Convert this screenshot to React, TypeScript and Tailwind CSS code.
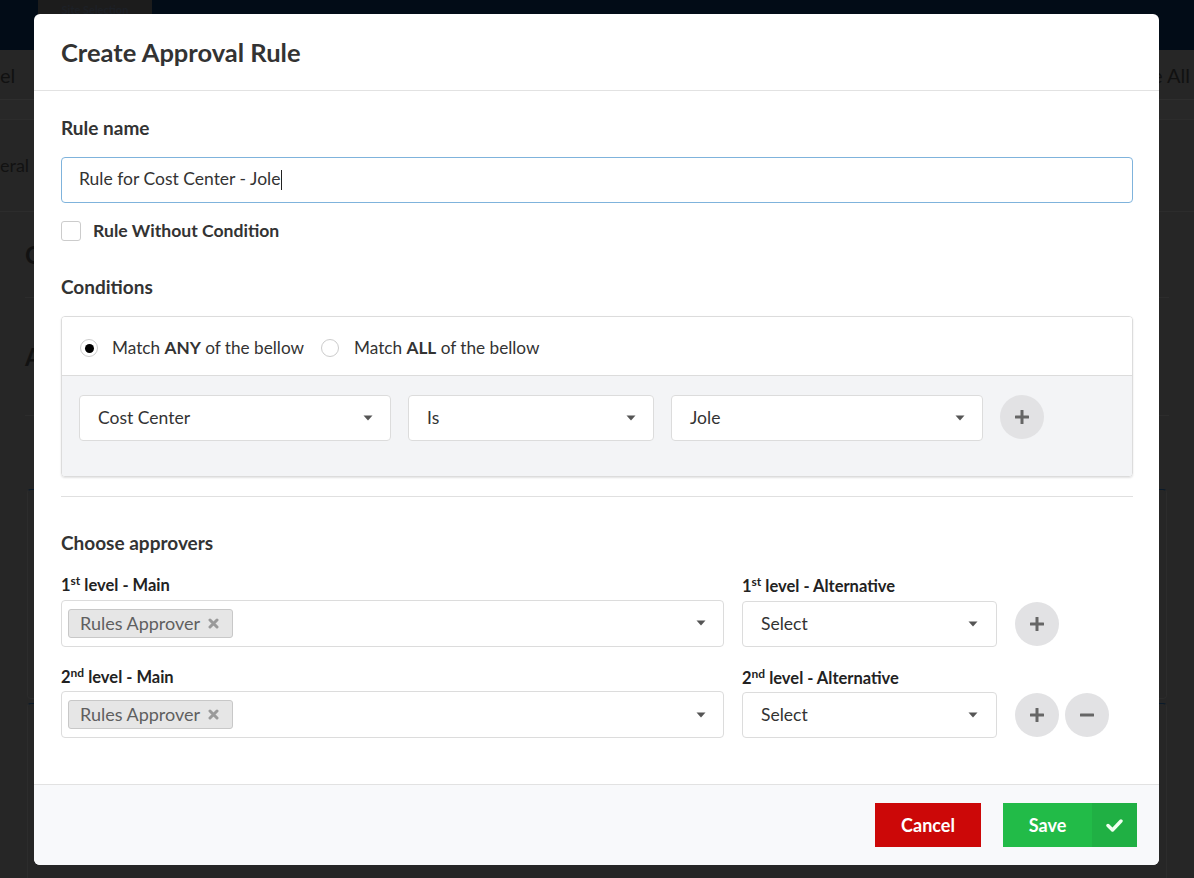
import React from "react";

const Caret = () => (
  <svg width="10" height="6" viewBox="0 0 10 6" className="shrink-0">
    <path d="M0.5 0.5 L9.5 0.5 L5 5.5 Z" fill="#555" />
  </svg>
);

const Select = ({ value, className = "" }: { value: string; className?: string }) => (
  <div
    className={
      "flex h-[46px] items-center justify-between rounded-[4px] border border-[#dcdcdc] bg-white pl-[18px] pr-[17px] text-[17.5px] text-[#333] " +
      className
    }
  >
    <span>{value}</span>
    <Caret />
  </div>
);

const RoundButton = ({ kind }: { kind: "plus" | "minus" }) => (
  <button className="flex h-[44px] w-[44px] items-center justify-center rounded-full bg-[#e2e2e4]">
    <svg width="14" height="14" viewBox="0 0 14 14">
      {kind === "plus" && <rect x="5.5" y="0" width="3" height="14" rx="0.5" fill="#666" />}
      <rect x="0" y="5.5" width="14" height="3" rx="0.5" fill="#666" />
    </svg>
  </button>
);

const Tag = () => (
  <div className="flex h-[29px] items-center gap-[8px] rounded-[3px] border border-[#c8c8c8] bg-[#e6e6e6] pl-[11px] pr-[13px] text-[18px] text-[#5f5f5f]">
    <span>Rules Approver</span>
    <svg width="11" height="11" viewBox="0 0 11 11">
      <path d="M2 2 L9 9 M9 2 L2 9" stroke="#9a9a9a" strokeWidth="3" strokeLinecap="round" />
    </svg>
  </div>
);

const MultiSelect = () => (
  <div className="flex h-[47px] items-center justify-between rounded-[4px] border border-[#dcdcdc] bg-white pl-[6px] pr-[17px]">
    <Tag />
    <Caret />
  </div>
);

const LevelLabel = ({ n, sup, text }: { n: string; sup: string; text: string }) => (
  <div className="mb-[2px] text-[16.5px] font-bold text-[#222]">
    {n}
    <sup className="text-[12px]">{sup}</sup> {text}
  </div>
);

const Radio = ({ checked }: { checked?: boolean }) => (
  <span className="flex h-[18px] w-[18px] items-center justify-center rounded-full border border-[#ccc] bg-white">
    {checked && <span className="h-[9px] w-[9px] rounded-full bg-black" />}
  </span>
);

export default function App() {
  return (
    <div className="relative h-[878px] w-full overflow-hidden bg-[#262626] font-['Lato','Open_Sans',sans-serif]">
      {/* dimmed page behind the dialog */}
      <div className="flex h-[50px] bg-[#020c17]">
        <div className="ml-[38px] w-[114px] bg-[#1c1c1c] pt-[2px] text-center text-[11px] font-bold text-[#1c2026]">
          Site Selection
        </div>
      </div>
      <div className="flex h-[50px] items-center justify-between border-b border-[#2e2e2e] pr-[4px] text-[20px] text-[#111]">
        <span>el</span>
        <span>ge All</span>
      </div>
      <div className="h-[20px] border-b border-[#2c2c2c] bg-[#282828]" />
      <div className="flex h-[92px] items-center border-b border-[#2c2c2c] text-[18px] text-[#121212]">
        <span>eral Info</span>
      </div>
      <div className="mx-[25px] flex h-[86px] items-center border-b border-[#2c2c2c] text-[24px] font-bold text-[#121212]">
        C
      </div>
      <div className="mx-[25px] flex h-[118px] items-center border-b border-[#2c2c2c] text-[24px] font-bold text-[#121212]">
        A
      </div>
      <div className="mx-[27px] mt-[73px] h-[210px] rounded-[4px] border border-[#2c2c2c] border-t-[#0a1a2a]" />
      <div className="mx-[27px] mt-[4px] h-[180px] rounded-[4px] border border-[#2c2c2c] border-t-[#0a1a2a]" />

      {/* dialog overlay */}
      <div className="absolute inset-0 flex justify-start pl-[34px] pt-[14px]">
        <div className="flex h-[851px] w-[1125px] flex-col overflow-hidden rounded-[6px] bg-white text-[#333]">
          <div className="flex h-[77px] shrink-0 items-center border-b border-[#e2e2e2] px-[27px]">
            <h1 className="text-[25.5px] font-bold text-[#333]">Create Approval Rule</h1>
          </div>

          <div className="flex-1 pl-[27px] pr-[26px] pt-[23px]">
            <div className="text-[19px] font-bold text-[#333]">Rule name</div>
            <div className="mt-[14px] flex h-[46px] items-center rounded-[4px] border border-[#7fb3dc] pl-[17px] text-[17.5px] text-[#333]">
              Rule for Cost Center - Jole<span className="ml-[1px] h-[20px] w-[1px] bg-[#222]" />
            </div>
            <label className="mt-[15px] flex items-center gap-[12px]">
              <span className="h-[20px] w-[20px] rounded-[3px] border border-[#ccc] bg-white" />
              <span className="text-[17.6px] font-bold text-[#333]">Rule Without Condition</span>
            </label>

            <div className="mt-[29px] text-[19px] font-bold text-[#333]">Conditions</div>
            <div className="mt-[15px] overflow-hidden rounded-[4px] border border-[#dcdcdc] shadow-[0_1px_2px_rgba(0,0,0,0.12)]">
              <div className="flex h-[59px] items-center border-b border-[#dcdcdc] bg-white pl-[18px] pt-[4px] text-[17.2px] text-[#333]">
                <Radio checked />
                <span className="ml-[14px]">
                  Match <b>ANY</b> of the bellow
                </span>
                <span className="ml-[17px]">
                  <Radio />
                </span>
                <span className="ml-[15px]">
                  Match <b>ALL</b> of the bellow
                </span>
              </div>
              <div className="flex h-[100px] items-start gap-[17px] bg-[#f3f4f6] pl-[17px] pt-[19px]">
                <Select value="Cost Center" className="w-[312px]" />
                <Select value="Is" className="w-[246px]" />
                <Select value="Jole" className="w-[312px]" />
                <RoundButton kind="plus" />
              </div>
            </div>

            <div className="mt-[19px] border-t border-[#e0e0e0]" />

            <div className="mt-[32px] text-[19px] font-bold text-[#333]">Choose approvers</div>
            <div className="mt-[15px] flex flex-col gap-[18px]">
              <div className="flex items-end gap-[18px]">
                <div className="w-[663px]">
                  <LevelLabel n="1" sup="st" text="level - Main" />
                  <MultiSelect />
                </div>
                <div className="w-[255px]">
                  <LevelLabel n="1" sup="st" text="level - Alternative" />
                  <Select value="Select" className="pr-[18px]" />
                </div>
                <div className="flex pb-[1px]">
                  <RoundButton kind="plus" />
                </div>
              </div>
              <div className="flex items-end gap-[18px]">
                <div className="w-[663px]">
                  <LevelLabel n="2" sup="nd" text="level - Main" />
                  <MultiSelect />
                </div>
                <div className="w-[255px]">
                  <LevelLabel n="2" sup="nd" text="level - Alternative" />
                  <Select value="Select" className="pr-[18px]" />
                </div>
                <div className="flex gap-[6px] pb-[1px]">
                  <RoundButton kind="plus" />
                  <RoundButton kind="minus" />
                </div>
              </div>
            </div>
          </div>

          <div className="flex h-[81px] shrink-0 items-center justify-end gap-[22px] border-t border-[#e2e2e2] bg-[#f8f9fb] pr-[22px]">
            <button className="h-[44px] w-[106px] bg-[#cc0808] text-[18px] font-bold text-white">Cancel</button>
            <button className="flex h-[44px] w-[134px] bg-[#22bb48] text-[18px] font-bold text-white">
              <span className="flex flex-1 items-center justify-center">Save</span>
              <span className="flex w-[45px] items-center justify-center bg-[#20b044]">
                <svg width="17" height="13" viewBox="0 0 17 13">
                  <path d="M2 6.5 L6.5 11 L15 2" stroke="#f0fff0" strokeWidth="3.4" fill="none" strokeLinecap="round" strokeLinejoin="round" />
                </svg>
              </span>
            </button>
          </div>
        </div>
      </div>
    </div>
  );
}
